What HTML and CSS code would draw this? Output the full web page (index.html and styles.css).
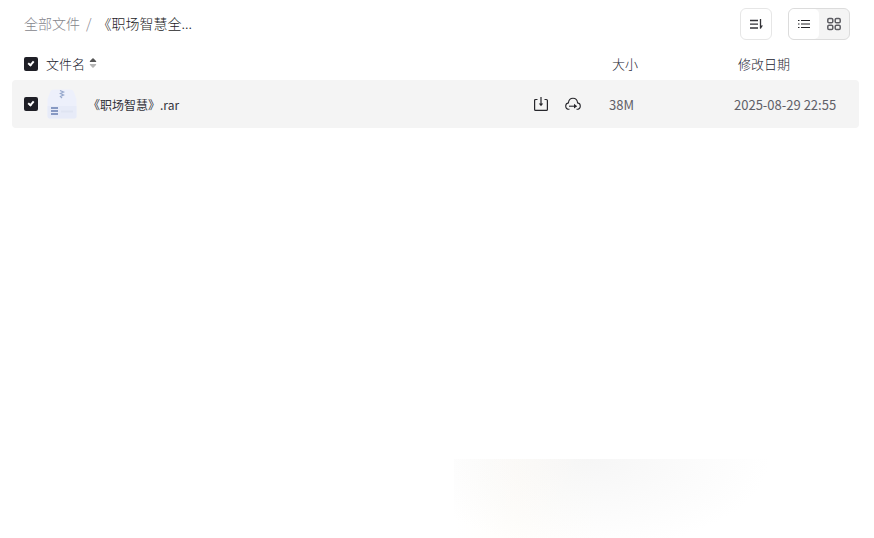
FILE: index.html
```
<!DOCTYPE html>
<html lang="zh-CN">
<head>
    <meta charset="UTF-8">
    <meta name="viewport" content="width=device-width, initial-scale=1.0">
    <title>全部文件</title>
    <link rel="stylesheet" href="styles.css">
</head>
<body>
    <header class="toolbar">
        <nav class="breadcrumb">
            <a href="#">全部文件</a>
            <span class="slash">/</span>
            <span class="current">《职场智慧全...</span>
        </nav>
        <div class="actions">
            <button class="sort-button" type="button" aria-label="排序">
                <svg width="16" height="16" viewBox="0 0 16 16" fill="none" stroke="#333338" stroke-width="1.3">
                    <path d="M2 4.5h8M2 8.2h8M2 12h8"/>
                    <path d="M12.5 3v9.5"/>
                    <path d="M12.5 9.5h2.5l-2.5 3.5z" fill="#333338" stroke="none"/>
                </svg>
            </button>
            <div class="view-switch">
                <button class="active" type="button" aria-label="列表">
                    <svg width="14" height="14" viewBox="0 0 14 14" stroke="#222226" stroke-width="1.2">
                        <path d="M1 3.5h1.5M4 3.5h9M1 7h1.5M4 7h9M1 10.5h1.5M4 10.5h9"/>
                    </svg>
                </button>
                <button type="button" aria-label="网格">
                    <svg width="14" height="14" viewBox="0 0 14 14" fill="none" stroke="#5c5c62" stroke-width="1.5">
                        <rect x="0.8" y="1.5" width="5" height="4.3" rx="1.3"/>
                        <rect x="8.2" y="1.5" width="5" height="4.3" rx="1.3"/>
                        <rect x="0.8" y="8.2" width="5" height="4.3" rx="1.3"/>
                        <rect x="8.2" y="8.2" width="5" height="4.3" rx="1.3"/>
                    </svg>
                </button>
            </div>
        </div>
    </header>

    <main>
        <table class="files">
            <thead>
                <tr>
                    <th class="check"><input type="checkbox" aria-label="全选" checked></th>
                    <th class="name">
                        <button class="sort" type="button">文件名
                            <svg width="8" height="12" viewBox="0 0 8 12">
                                <path d="M1 5Q0.5 4.5 1 4L3.4 1.4Q4 1 4.6 1.4L7 4Q7.5 4.5 7 5z" fill="#555"/>
                                <path d="M1 7Q0.5 7.5 1 8L3.4 10.6Q4 11 4.6 10.6L7 8Q7.5 7.5 7 7z" fill="#b5b5b5"/>
                            </svg>
                        </button>
                    </th>
                    <th class="size">大小</th>
                    <th class="date">修改日期</th>
                </tr>
            </thead>
            <tbody>
                <tr>
                    <td class="check"><input type="checkbox" aria-label="《职场智慧》.rar" checked></td>
                    <td class="name">
                        <div class="file">
                            <svg width="32" height="32" viewBox="0 0 32 32">
                                <path d="M4 4.5Q4.8 1.5 8 1.5H24Q27.2 1.5 28 4.5L30.5 11V28Q30.5 30.5 28 30.5H4Q1.5 30.5 1.5 28V11z" fill="#edf0fb"/>
                                <path d="M1.5 18H30.5V28Q30.5 30.5 28 30.5H4Q1.5 30.5 1.5 28z" fill="#e7ebf8"/>
                                <path d="M14 2.5l3.5 1.5-3 1.5 3 1.5-3 1.5 1.5 1.5" fill="none" stroke="#98a9cd" stroke-width="1.3"/>
                                <path d="M5 20h7M5 23h7M5 26h7" stroke="#8799c3" stroke-width="2"/>
                                <path d="M15 23.5h12" stroke="#dfe4f2" stroke-width="2"/>
                            </svg>
                            <a href="#">《职场智慧》.rar</a>
                            <div class="file-actions">
                                <button type="button" aria-label="下载">
                                    <svg width="16" height="16" viewBox="0 0 16 16" fill="none" stroke="#26262b" stroke-width="1.2">
                                        <path d="M4.5 3.5H2.6Q1.6 3.5 1.6 4.5V13.4Q1.6 14.4 2.6 14.4H13.4Q14.4 14.4 14.4 13.4V4.5Q14.4 3.5 13.4 3.5H11.5"/>
                                        <path d="M8 1v8"/>
                                        <path d="M5.8 7.5h4.4L8 10.3z" fill="#26262b" stroke="none"/>
                                    </svg>
                                </button>
                                <button type="button" aria-label="转存">
                                    <svg width="16" height="16" viewBox="0 0 16 16" fill="none" stroke="#26262b" stroke-width="1.1">
                                        <path d="M4.5 13.3Q0.7 13.2 0.7 9.9Q0.9 7.3 3.4 6.9Q4 2.3 8 2.3Q12 2.3 12.6 6.9Q15.2 7.3 15.3 9.9Q15.3 13.2 11.5 13.3"/>
                                        <path d="M4 10.2h6"/>
                                        <path d="M9 7.8l3.2 2.4L9 12.6z" fill="#26262b" stroke="none"/>
                                    </svg>
                                </button>
                            </div>
                        </div>
                    </td>
                    <td class="size">38M</td>
                    <td class="date">2025-08-29 22:55</td>
                </tr>
            </tbody>
        </table>
    </main>

    <div class="glow"></div>
</body>
</html>
```
FILE: styles.css
```
* { box-sizing: border-box; }
body { margin: 0; min-height: 100vh; display: flex; flex-direction: column; background: #fff; color: #333340; font-family: "Noto Sans CJK SC", sans-serif; font-size: 13px; }
a { color: inherit; text-decoration: none; }
button { padding: 0; border: none; background: none; color: inherit; font: inherit; cursor: pointer; }
svg { display: block; }

.toolbar { display: flex; justify-content: space-between; align-items: center; height: 48px; padding: 0 24px; }
.breadcrumb { display: flex; padding-bottom: 2px; font-size: 14px; font-weight: 300; line-height: 20px; }
.breadcrumb a, .slash { color: #85858c; }
.slash { margin: 0 6px; }
.current { color: #1c1c26; }

.actions { display: flex; gap: 16px; }
.sort-button { display: grid; place-items: center; width: 32px; height: 32px; border: 1px solid #e6e6e6; border-radius: 6px; }
.view-switch { display: flex; width: 62px; height: 32px; border: 1px solid #dcdcdc; border-radius: 6px; background: #f4f4f4; overflow: hidden; }
.view-switch button { display: grid; place-items: center; flex: 1; }
.view-switch .active { background: #fff; border-radius: 5px; }

main { flex: 1; padding: 0 15px 0 12px; }
.files { width: 100%; table-layout: fixed; border-collapse: collapse; text-align: left; }
th, td { padding: 0; }
th { height: 32px; color: #22222e; font-weight: 300; }
th.name, th.size, th.date { padding-bottom: 2px; }
td { height: 48px; background: #f4f4f4; color: #606068; }
td:first-child { border-radius: 4px 0 0 4px; }
td:last-child { border-radius: 0 4px 4px 0; }
.check { width: 34px; padding-left: 12px; }
.size, .date { width: 125px; }
th.size { padding-left: 3px; }
th.date { padding-left: 4px; }

input[type="checkbox"] { display: block; appearance: none; width: 14px; height: 14px; margin: 0; border-radius: 2px; background: #1f1f26; }
input[type="checkbox"]:checked::before { content: ""; display: block; width: 2px; height: 4px; margin: 3px auto 0; border: solid #fff; border-width: 0 2px 2px 0; transform: rotate(40deg); }

.sort { display: flex; align-items: center; gap: 4px; }
.file { display: flex; align-items: center; }
.file a { margin-left: 10px; color: #33333c; font-size: 12px; }
.file-actions { display: flex; gap: 16px; margin-left: auto; margin-right: 28px; }

.glow { position: fixed; bottom: 0; left: 52%; width: 36%; height: 79px; background: linear-gradient(90deg, transparent, rgba(255, 248, 236, 0.2) 20%, transparent 45%), radial-gradient(ellipse 180px 90px at 43% 0, #f6f6f6, #fff); pointer-events: none; }
```
